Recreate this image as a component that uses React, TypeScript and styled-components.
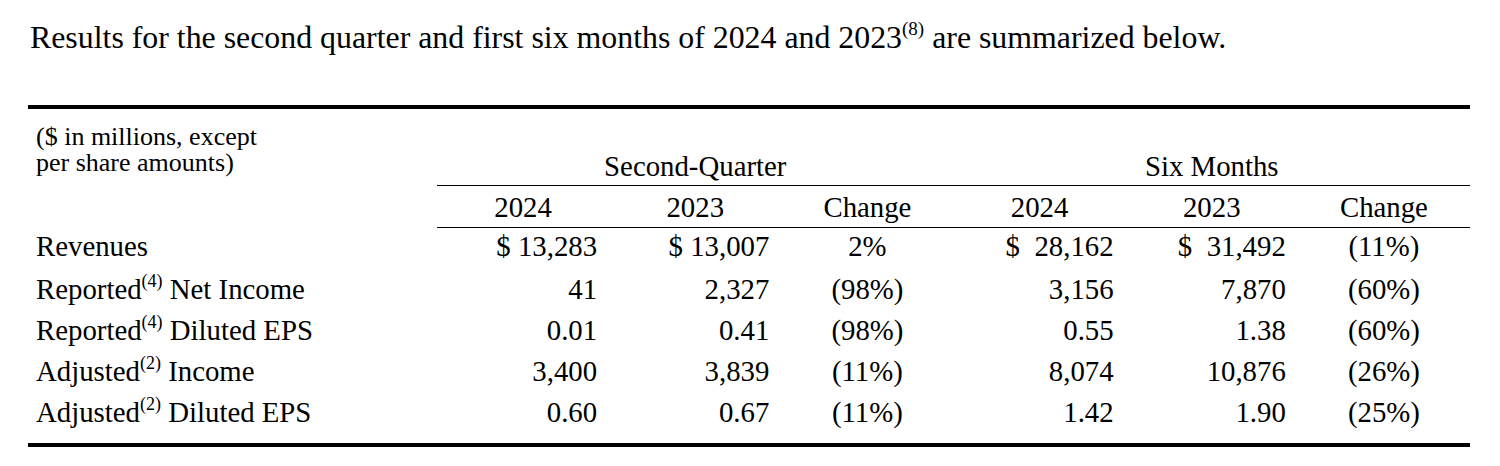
import React from 'react'
import styled, { createGlobalStyle } from 'styled-components'

const GlobalStyle = createGlobalStyle`
  html, body {
    margin: 0;
    padding: 0;
    background: #ffffff;
  }
  body {
    font-family: "Liberation Serif", "Times New Roman", serif;
    color: #000000;
  }
`

const COLUMNS = '409px repeat(6, 1fr)'

const Page = styled.div`
  width: 1500px;
  padding: 18px 30px 0 28px;
  box-sizing: border-box;
`

const Intro = styled.p`
  margin: 0 0 47px 2px;
  font-size: 31.85px;
  line-height: 40px;
  white-space: nowrap;
`

const Sup = styled.sup<{ size?: number }>`
  font-size: ${p => p.size ?? 18}px;
  line-height: 0;
  vertical-align: 0.66em;
`

const Table = styled.div`
  width: 1442px;
  border-top: 4px solid #000;
  border-bottom: 4px solid #000;
  font-size: 28.8px;
`

const HeaderGrid = styled.div`
  display: grid;
  grid-template-columns: ${COLUMNS};
  grid-template-rows: 77px 42px;
`

const UnitsCell = styled.div`
  grid-column: 1;
  grid-row: 1 / span 2;
  padding: 15px 0 0 8px;
  font-size: 26px;
  line-height: 26px;
`

const GroupCell = styled.div<{ start: number }>`
  grid-column: ${p => p.start} / span 3;
  grid-row: 1;
  display: flex;
  align-items: flex-end;
  justify-content: center;
  padding-bottom: 3px;
  border-bottom: 1px solid #000;
  line-height: 32px;
  box-sizing: border-box;
`

const YearCell = styled.div`
  grid-row: 2;
  display: flex;
  align-items: flex-end;
  justify-content: center;
  padding-bottom: 4px;
  border-bottom: 1px solid #000;
  line-height: 32px;
  box-sizing: border-box;
`

const Body = styled.div`
  padding: 0 0 11px;
`

const Row = styled.div`
  display: grid;
  grid-template-columns: ${COLUMNS};
  height: 41px;
  align-items: center;
  line-height: 32px;
  &:first-child {
    height: 40px;
    align-items: start;
    padding-top: 2px;
    box-sizing: border-box;
  }
`

const LabelCell = styled.div`
  padding-left: 8px;
  white-space: nowrap;
`

const ValueCell = styled.div<{ spread?: boolean }>`
  display: flex;
  justify-content: ${p => (p.spread ? 'space-between' : 'flex-end')};
  padding: ${p => (p.spread ? '0 12px 0 52px' : '0 12px 0 0')};
  white-space: nowrap;
`

const ChangeCell = styled.div`
  text-align: center;
  white-space: nowrap;
`

type Line = {
  label: string
  note?: string
  rest?: string
  q24: string
  q23: string
  qChg: string
  s24: string
  s23: string
  sChg: string
  dollar?: boolean
}

const lines: Line[] = [
  { label: 'Revenues', q24: '13,283', q23: '13,007', qChg: '2%', s24: '28,162', s23: '31,492', sChg: '(11%)', dollar: true },
  { label: 'Reported', note: '(4)', rest: 'Net Income', q24: '41', q23: '2,327', qChg: '(98%)', s24: '3,156', s23: '7,870', sChg: '(60%)' },
  { label: 'Reported', note: '(4)', rest: 'Diluted EPS', q24: '0.01', q23: '0.41', qChg: '(98%)', s24: '0.55', s23: '1.38', sChg: '(60%)' },
  { label: 'Adjusted', note: '(2)', rest: 'Income', q24: '3,400', q23: '3,839', qChg: '(11%)', s24: '8,074', s23: '10,876', sChg: '(26%)' },
  { label: 'Adjusted', note: '(2)', rest: 'Diluted EPS', q24: '0.60', q23: '0.67', qChg: '(11%)', s24: '1.42', s23: '1.90', sChg: '(25%)' },
]

const years = ['2024', '2023', 'Change', '2024', '2023', 'Change']

const App: React.FC = () => {
  return (
    <Page>
      <GlobalStyle />
      <Intro>
        Results for the second quarter and first six months of 2024 and 2023
        <Sup size={19}>(8)</Sup> are summarized below.
      </Intro>

      <Table>
        <HeaderGrid>
          <UnitsCell>
            ($ in millions, except
            <br />
            per share amounts)
          </UnitsCell>
          <GroupCell start={2}>Second-Quarter</GroupCell>
          <GroupCell start={5}>Six Months</GroupCell>
          {years.map((y, i) => (
            <YearCell key={i}>{y}</YearCell>
          ))}
        </HeaderGrid>

        <Body>
          {lines.map((l, i) => (
            <Row key={i}>
              <LabelCell>
                {l.label}
                {l.note && <Sup>{l.note}</Sup>}
                {l.rest && ` ${l.rest}`}
              </LabelCell>
              <ValueCell>{l.dollar ? `$ ${l.q24}` : l.q24}</ValueCell>
              <ValueCell>{l.dollar ? `$ ${l.q23}` : l.q23}</ValueCell>
              <ChangeCell>{l.qChg}</ChangeCell>
              <ValueCell spread={l.dollar}>
                {l.dollar && <span>$</span>}
                <span>{l.s24}</span>
              </ValueCell>
              <ValueCell spread={l.dollar}>
                {l.dollar && <span>$</span>}
                <span>{l.s23}</span>
              </ValueCell>
              <ChangeCell>{l.sChg}</ChangeCell>
            </Row>
          ))}
        </Body>
      </Table>
    </Page>
  )
}

export default App
